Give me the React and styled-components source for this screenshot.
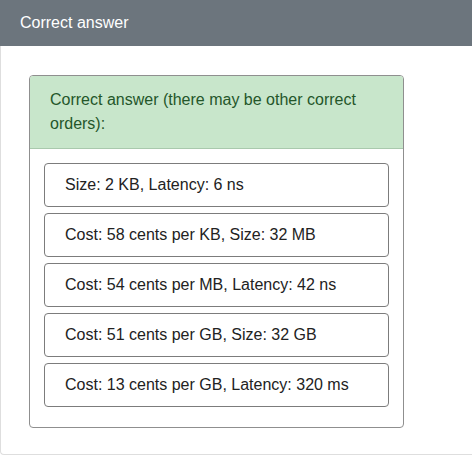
import React from 'react';
import styled, { createGlobalStyle } from 'styled-components';

const GlobalStyle = createGlobalStyle`
  body {
    margin: 0;
    background: #fff;
    font-family: "Liberation Sans", Arial, sans-serif;
  }
`;

// the right edge of the card is cut off in the screenshot
const Card = styled.div`
  width: 100%;
  border: 1px solid #dedede;
  border-top: none;
  border-right: none;
  border-radius: 0 0 0 4px;
  box-sizing: border-box;
`;

const CardHeader = styled.div`
  height: 46px;
  margin-left: -1px;
  padding: 0 20px;
  display: flex;
  align-items: center;
  background: #6c757d;
  color: #fff;
  font-size: 16px;
`;

const CardBody = styled.div`
  padding: 29px 0 26px 28px;
`;

const AnswerBox = styled.div`
  width: 375px;
  box-sizing: border-box;
  border: 1px solid #8f8f8f;
  border-radius: 4px;
  overflow: hidden;
`;

const AnswerHeader = styled.div`
  background: #c8e6cb;
  color: #24562a;
  font-size: 16px;
  line-height: 24px;
  padding: 12px 20px 12px;
  border-bottom: 1px solid #a9c9ad;
`;

const List = styled.div`
  display: flex;
  flex-direction: column;
  gap: 6px;
  padding: 14px 14px 20px;
`;

const Item = styled.div`
  height: 44px;
  box-sizing: border-box;
  border: 1px solid #7c7c7c;
  border-radius: 4px;
  padding: 0 20px;
  display: flex;
  align-items: center;
  font-size: 16px;
  color: #222;
`;

const items = [
  'Size: 2 KB, Latency: 6 ns',
  'Cost: 58 cents per KB, Size: 32 MB',
  'Cost: 54 cents per MB, Latency: 42 ns',
  'Cost: 51 cents per GB, Size: 32 GB',
  'Cost: 13 cents per GB, Latency: 320 ms',
];

export default function App() {
  return (
    <>
      <GlobalStyle />
      <Card>
        <CardHeader>Correct answer</CardHeader>
        <CardBody>
          <AnswerBox>
            <AnswerHeader>Correct answer (there may be other correct orders):</AnswerHeader>
            <List>
              {items.map((t) => (
                <Item key={t}>{t}</Item>
              ))}
            </List>
          </AnswerBox>
        </CardBody>
      </Card>
    </>
  );
}
